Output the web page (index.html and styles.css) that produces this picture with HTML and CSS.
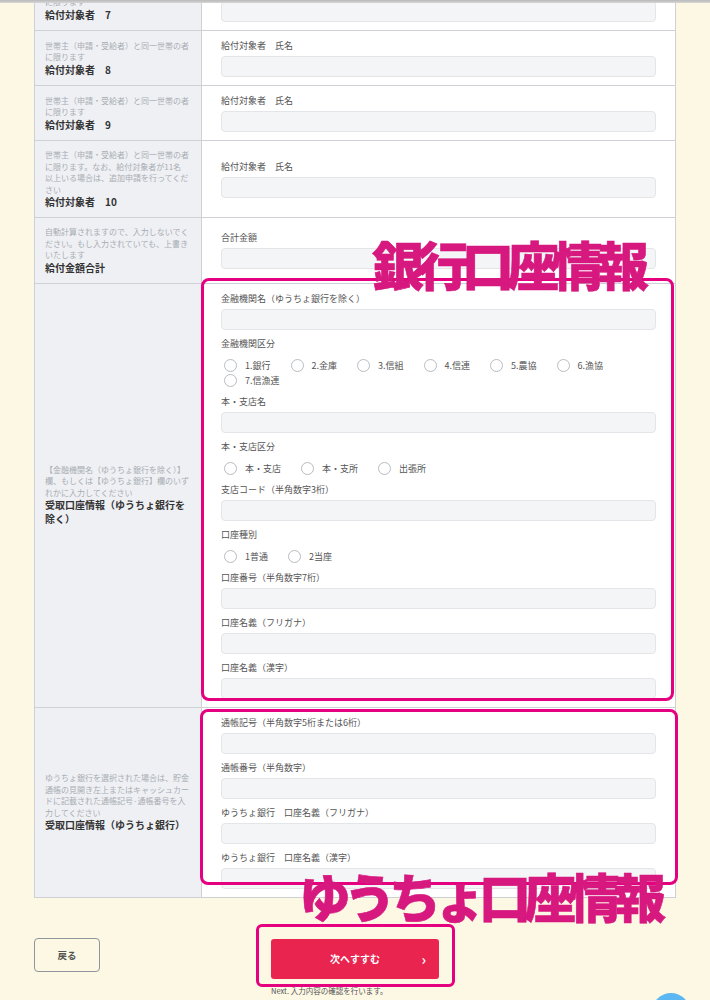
FILE: index.html
```html
<!DOCTYPE html>
<html lang="ja">
<head>
<meta charset="utf-8">
<title>申請フォーム</title>
<link rel="stylesheet" href="styles.css">
</head>
<body>
<div class="page">
  <table class="form-table">
    <tr>
      <th><span class="hint">世帯主（申請・受給者）と同一世帯の者<br>に限ります</span><span class="th-title">給付対象者　7</span></th>
      <td><div class="field"><span class="field-label">給付対象者　氏名</span><input class="text-input" type="text"></div></td>
    </tr>
    <tr>
      <th><span class="hint">世帯主（申請・受給者）と同一世帯の者<br>に限ります</span><span class="th-title">給付対象者　8</span></th>
      <td><div class="field"><span class="field-label">給付対象者　氏名</span><input class="text-input" type="text"></div></td>
    </tr>
    <tr>
      <th><span class="hint">世帯主（申請・受給者）と同一世帯の者<br>に限ります</span><span class="th-title">給付対象者　9</span></th>
      <td><div class="field"><span class="field-label">給付対象者　氏名</span><input class="text-input" type="text"></div></td>
    </tr>
    <tr>
      <th><span class="hint">世帯主（申請・受給者）と同一世帯の者<br>に限ります。なお、給付対象者が11名<br>以上いる場合は、追加申請を行ってくだ<br>さい</span><span class="th-title">給付対象者　10</span></th>
      <td><div class="field"><span class="field-label">給付対象者　氏名</span><input class="text-input" type="text"></div></td>
    </tr>
    <tr>
      <th><span class="hint">自動計算されますので、入力しないでく<br>ださい。もし入力されていても、上書き<br>いたします</span><span class="th-title">給付金額合計</span></th>
      <td><div class="field"><span class="field-label">合計金額</span><input class="text-input" type="text"></div></td>
    </tr>
    <tr>
      <th><span class="hint">【金融機関名（ゆうちょ銀行を除く）】<br>欄、もしくは【ゆうちょ銀行】欄のいず<br>れかに入力してください</span><span class="th-title">受取口座情報（ゆうちょ銀行を除く）</span></th>
      <td>
        <div class="field"><span class="field-label">金融機関名（ゆうちょ銀行を除く）</span><input class="text-input" type="text"></div>
        <div class="field"><span class="field-label">金融機関区分</span>
          <div class="radios">
            <label class="radio"><input type="radio" name="kubun">1.銀行</label>
            <label class="radio"><input type="radio" name="kubun">2.金庫</label>
            <label class="radio"><input type="radio" name="kubun">3.信組</label>
            <label class="radio"><input type="radio" name="kubun">4.信連</label>
            <label class="radio"><input type="radio" name="kubun">5.農協</label>
            <label class="radio"><input type="radio" name="kubun">6.漁協</label>
            <label class="radio"><input type="radio" name="kubun">7.信漁連</label>
          </div>
        </div>
        <div class="field"><span class="field-label">本・支店名</span><input class="text-input" type="text"></div>
        <div class="field"><span class="field-label">本・支店区分</span>
          <div class="radios">
            <label class="radio"><input type="radio" name="shiten">本・支店</label>
            <label class="radio"><input type="radio" name="shiten">本・支所</label>
            <label class="radio"><input type="radio" name="shiten">出張所</label>
          </div>
        </div>
        <div class="field"><span class="field-label">支店コード（半角数字3桁）</span><input class="text-input" type="text"></div>
        <div class="field"><span class="field-label">口座種別</span>
          <div class="radios">
            <label class="radio"><input type="radio" name="shubetsu">1普通</label>
            <label class="radio"><input type="radio" name="shubetsu">2当座</label>
          </div>
        </div>
        <div class="field"><span class="field-label">口座番号（半角数字7桁）</span><input class="text-input" type="text"></div>
        <div class="field"><span class="field-label">口座名義（フリガナ）</span><input class="text-input" type="text"></div>
        <div class="field"><span class="field-label">口座名義（漢字）</span><input class="text-input" type="text"></div>
      </td>
    </tr>
    <tr>
      <th><span class="hint">ゆうちょ銀行を選択された場合は、貯金<br>通帳の見開き左上またはキャッシュカー<br>ドに記載された通帳記号·通帳番号を入<br>力してください</span><span class="th-title">受取口座情報（ゆうちょ銀行）</span></th>
      <td>
        <div class="field"><span class="field-label">通帳記号（半角数字5桁または6桁）</span><input class="text-input" type="text"></div>
        <div class="field"><span class="field-label">通帳番号（半角数字）</span><input class="text-input" type="text"></div>
        <div class="field"><span class="field-label">ゆうちょ銀行　口座名義（フリガナ）</span><input class="text-input" type="text"></div>
        <div class="field"><span class="field-label">ゆうちょ銀行　口座名義（漢字）</span><input class="text-input" type="text"></div>
      </td>
    </tr>
  </table>

  <div class="actions">
    <button class="back-btn" type="button">戻る</button>
    <div class="next-wrap">
      <button class="next-btn" type="button"><span class="next-text">次へすすむ</span><span class="next-chevron">›</span></button>
      <p class="next-note">Next. 入力内容の確認を行います。</p>
    </div>
    <div></div>
  </div>

  <div class="chrome-bar"></div>
  <div class="mark-box bank-box"></div>
  <div class="mark-box yucho-box"></div>
  <div class="mark-box next-box"></div>
  <div class="mark-label bank-label">銀行口座情報</div>
  <div class="mark-label yucho-label">ゆうちょ口座情報</div>
  <div class="pagetop">
    <svg width="38" height="38" viewBox="0 0 38 38"><path d="M19 9 L23 14 M19 9 L15 14 M19 9 V22" stroke="#1f3550" stroke-width="2" fill="none" stroke-linecap="round"/></svg>
  </div>
</div>
</body>
</html>
```

FILE: styles.css
```css
html, body {
  margin: 0;
  padding: 0;
  background: #fdf8e4;
}
body {
  font-family: "Noto Sans CJK JP", "Noto Sans", sans-serif;
  color: #444;
}
.page {
  position: relative;
  display: flow-root;
  width: 710px;
  min-height: 1000px;
}

/* table */
.form-table {
  margin: -25px 0 0 34px;
  width: 642px;
  border-collapse: collapse;
  table-layout: fixed;
  border: 1px solid #cdd1d6;
}
.form-table tr {
  border-bottom: 1px solid #cdd1d6;
}
.form-table th {
  width: 146px;
  padding: 8px 10px;
  background: #eff0f3;
  border-right: 1px solid #cdd1d6;
  text-align: left;
  vertical-align: middle;
  font-weight: normal;
}
.form-table td {
  padding: 8px 19px;
  background: #fff;
  vertical-align: middle;
}
.hint {
  display: block;
  font-size: 8px;
  line-height: 11.5px;
  color: #a8adb4;
  white-space: nowrap;
}
.th-title {
  display: block;
  font-size: 10px;
  line-height: 14px;
  font-weight: 700;
  color: #333;
}

/* fields */
.field + .field {
  margin-top: 7px;
}
.field-label {
  display: block;
  font-size: 9px;
  line-height: 14px;
  color: #555;
}
.text-input {
  display: block;
  box-sizing: border-box;
  width: 100%;
  height: 21px;
  margin: 3px 0 0;
  padding: 0 6px;
  background: #f4f5f6;
  border: 1px solid #e3e5e8;
  border-radius: 4px;
  font: inherit;
  outline: none;
}
.radios {
  display: flex;
  flex-wrap: wrap;
  padding: 7px 0 0 3px;
}
.radio {
  display: flex;
  align-items: center;
  gap: 8px;
  height: 15px;
  margin-right: 20px;
  font-size: 9px;
  color: #555;
  white-space: nowrap;
}
.radio input {
  -webkit-appearance: none;
  appearance: none;
  box-sizing: border-box;
  width: 13px;
  height: 13px;
  margin: 0;
  border: 1px solid #b8bcc1;
  border-radius: 50%;
  background: #fff;
}

/* actions */
.actions {
  display: grid;
  grid-template-columns: 1fr auto 1fr;
  align-items: start;
  margin-top: 40px;
}
.back-btn {
  justify-self: start;
  margin-left: 34px;
  width: 66px;
  height: 34px;
  background: transparent;
  border: 1px solid #8f959b;
  border-radius: 4px;
  font-family: inherit;
  font-size: 9.5px;
  font-weight: 700;
  color: #555;
  padding: 0;
}
.next-wrap {
  display: flex;
  flex-direction: column;
}
.next-btn {
  display: grid;
  grid-template-columns: 1fr auto 1fr;
  align-items: center;
  width: 168px;
  height: 40px;
  margin-top: 1px;
  padding: 0;
  background: #e8244f;
  border: none;
  border-radius: 3px;
  color: #fff;
  font-family: inherit;
  font-size: 10px;
  font-weight: 700;
}
.next-text {
  grid-column: 2;
}
.next-chevron {
  grid-column: 3;
  justify-self: end;
  margin-right: 13px;
  font-size: 14px;
  line-height: 1;
  font-weight: 700;
}
.next-note {
  margin: 6px 0 0;
  font-size: 7.5px;
  line-height: 11px;
  color: #555;
}

/* overlays */
.chrome-bar {
  position: absolute;
  left: 0;
  top: 0;
  width: 710px;
  height: 3px;
  background: linear-gradient(#b9b9b9, #d6d6d6);
}
.mark-box {
  position: absolute;
  box-sizing: border-box;
  border: 3px solid #e5007f;
  border-radius: 8px;
}
.bank-box {
  left: 201px;
  top: 278px;
  width: 473px;
  height: 423px;
}
.yucho-box {
  left: 200px;
  top: 709px;
  width: 478px;
  height: 176px;
}
.next-box {
  left: 256px;
  top: 924px;
  width: 199px;
  height: 63px;
  border-radius: 6px;
}
.mark-label {
  position: absolute;
  font-size: 52px;
  line-height: 1;
  font-weight: 900;
  letter-spacing: -7px;
  color: #d6187f;
  -webkit-text-stroke: 0.6px #d6187f;
  white-space: nowrap;
}
.bank-label {
  left: 372px;
  top: 238px;
}
.yucho-label {
  left: 299px;
  top: 870px;
}
.pagetop {
  position: absolute;
  left: 652px;
  top: 993px;
  width: 38px;
  height: 38px;
  border-radius: 50%;
  background: #5cb7f2;
}
.pagetop svg {
  display: block;
}
```
